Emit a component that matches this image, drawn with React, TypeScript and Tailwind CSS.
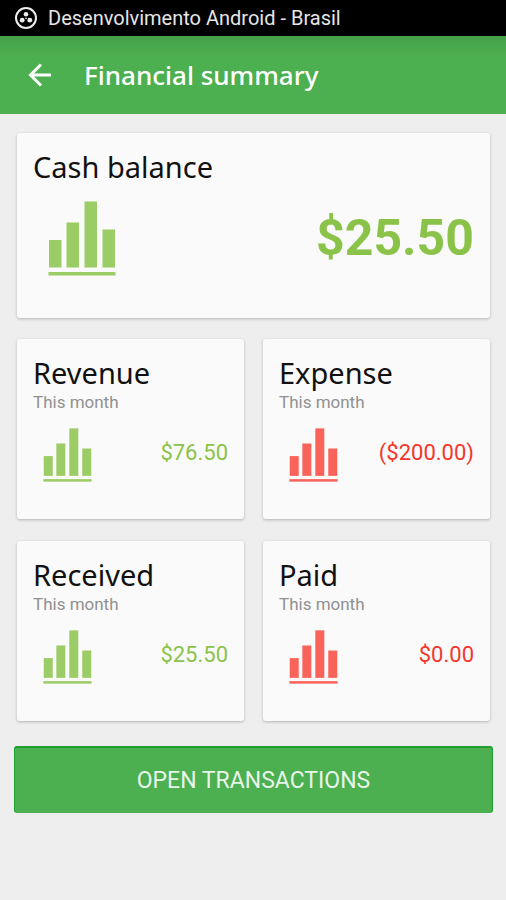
const GREEN = 'text-[#8bc34a]';
const RED = 'text-[#f5362b]';

const summaries = [
  { title: 'Revenue', amount: '$76.50', positive: true },
  { title: 'Expense', amount: '($200.00)', positive: false },
  { title: 'Received', amount: '$25.50', positive: true },
  { title: 'Paid', amount: '$0.00', positive: false },
];

const BarsIcon = ({ className }: { className: string }) => (
  <svg viewBox="0 0 68 75" fill="currentColor" className={className} aria-hidden="true">
    <rect x="1" y="39" width="12.5" height="27.5" />
    <rect x="18.5" y="21.5" width="12.5" height="45" />
    <rect x="36.5" y="0.5" width="12.5" height="66" />
    <rect x="54.5" y="28.5" width="12.5" height="38" />
    <rect x="0.5" y="71" width="67" height="3.5" />
  </svg>
);

const StatusIcon = () => (
  <svg viewBox="0 0 24 24" className="h-6 w-6 shrink-0" aria-hidden="true">
    <circle cx="12" cy="12" r="10" fill="none" stroke="#eee" strokeWidth="2" />
    <circle cx="12" cy="8.2" r="2.3" fill="#eee" />
    <circle cx="8.2" cy="14.2" r="2.4" fill="#eee" />
    <circle cx="15.8" cy="14.2" r="2.4" fill="#eee" />
    <circle cx="12" cy="12.4" r="0.8" fill="#eee" />
  </svg>
);

const SummaryCard = ({ title, amount, positive }: { title: string; amount: string; positive: boolean }) => (
  <section className="h-[180px] rounded-[3px] bg-[#fafafa] px-4 pt-4 shadow-[0_1px_3px_rgba(0,0,0,0.25)]">
    <h2 className="font-['Noto_Sans',sans-serif] text-[29px] leading-9 text-[#111]">{title}</h2>
    <p className="text-[17px] leading-[22px] text-[#909090]">This month</p>
    <div className="mt-[15px] flex items-start justify-between">
      <BarsIcon className={`ml-2.5 h-[54px] w-[49px] ${positive ? 'text-[#9ccc65]' : 'text-[#f9635a]'}`} />
      <span className={`mt-[11px] text-[22px] leading-7 ${positive ? GREEN : RED}`}>{amount}</span>
    </div>
  </section>
);

const App = () => {
  return (
    <div className="min-h-screen bg-[#eee] font-[Roboto,sans-serif]">
      {/* Status bar */}
      <div className="flex h-9 items-center gap-2.5 bg-black px-3.5 text-[#e6e6e6]">
        <StatusIcon />
        <span className="text-[20px] leading-6">Desenvolvimento Android - Brasil</span>
      </div>

      {/* Toolbar */}
      <header className="flex h-[78px] items-center gap-8 bg-[#4caf50] bg-linear-to-b from-[#45a049] to-[#4caf50] to-25% px-7 text-white">
        <button type="button" aria-label="Back">
          <svg viewBox="0 0 24 24" className="h-6 w-6" fill="none" stroke="currentColor" strokeWidth="3" aria-hidden="true">
            <path d="M23 12H3M13 1.5L2.5 12L13 22.5" />
          </svg>
        </button>
        <h1 className="font-['Noto_Sans',sans-serif] text-[26px] leading-8 font-medium">Financial summary</h1>
      </header>

      <main className="pt-[19px] pr-4 pl-[17px]">
        {/* Cash balance */}
        <section className="h-[185px] rounded-[3px] bg-[#fafafa] px-4 pt-4 shadow-[0_1px_3px_rgba(0,0,0,0.25)]">
          <h2 className="font-['Noto_Sans',sans-serif] text-[29px] leading-9 text-[#111]">Cash balance</h2>
          <div className="mt-4 flex items-start justify-between">
            <BarsIcon className="ml-[15px] h-[75px] w-[68px] text-[#9ccc65]" />
            <span className="mt-[9px] text-[50px] leading-14 font-bold text-[#8bc34a]">$25.50</span>
          </div>
        </section>

        {/* Monthly cards */}
        <div className="mt-[21px] grid grid-cols-2 gap-x-[19px] gap-y-[22px]">
          {summaries.map((item) => (
            <SummaryCard key={item.title} {...item} />
          ))}
        </div>

        <button
          type="button"
          className="-mx-[3px] mt-[25px] h-[67px] w-[calc(100%+6px)] rounded-[3px] border border-t-2 border-[#1fa030] border-b-[#4caf50] bg-[#4caf50] pt-0.5 text-[23px] leading-7 text-[#e8f5e9]"
        >
          OPEN TRANSACTIONS
        </button>
      </main>
    </div>
  );
};

export default App;
